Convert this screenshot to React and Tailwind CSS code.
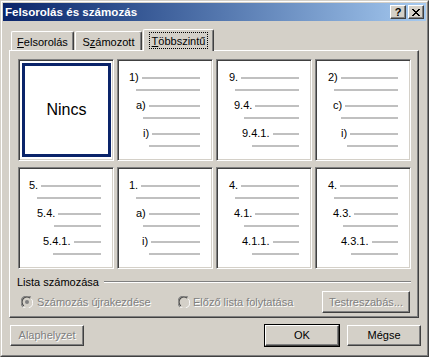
import React from "react";

const F = { fontFamily: '"Liberation Sans", Arial, sans-serif' };

const cells = [
  { none: true },
  {
    levels: [
      { t: "1)", l: "ml-[10px]", b: "ml-[17px]" },
      { t: "a)", l: "ml-[17px]", b: "ml-[24px]" },
      { t: "i)", l: "ml-[24px]", b: "ml-[30px]" },
    ],
  },
  {
    levels: [
      { t: "9.", l: "ml-[11px]", b: "ml-[17px]" },
      { t: "9.4.", l: "ml-[16px]", b: "ml-[26px]" },
      { t: "9.4.1.", l: "ml-[24px]", b: "ml-[34px]" },
    ],
  },
  {
    levels: [
      { t: "2)", l: "ml-[11px]", b: "ml-[17px]" },
      { t: "c)", l: "ml-[16px]", b: "ml-[24px]" },
      { t: "i)", l: "ml-[24px]", b: "ml-[30px]" },
    ],
  },
  {
    levels: [
      { t: "5.", l: "ml-[9px]", b: "ml-[17px]" },
      { t: "5.4.", l: "ml-[17px]", b: "ml-[34px]" },
      { t: "5.4.1.", l: "ml-[23px]", b: "ml-[33px]" },
    ],
  },
  {
    levels: [
      { t: "1.", l: "ml-[10px]", b: "ml-[17px]" },
      { t: "a)", l: "ml-[17px]", b: "ml-[24px]" },
      { t: "i)", l: "ml-[23px]", b: "ml-[30px]" },
    ],
  },
  {
    levels: [
      { t: "4.", l: "ml-[11px]", b: "ml-[17px]" },
      { t: "4.1.", l: "ml-[16px]", b: "ml-[26px]" },
      { t: "4.1.1.", l: "ml-[24px]", b: "ml-[34px]" },
    ],
  },
  {
    levels: [
      { t: "4.", l: "ml-[11px]", b: "ml-[17px]" },
      { t: "4.3.", l: "ml-[16px]", b: "ml-[26px]" },
      { t: "4.3.1.", l: "ml-[24px]", b: "ml-[34px]" },
    ],
  },
];

const raised =
  "border border-t-white border-l-white border-b-[#404040] border-r-[#404040] shadow-[inset_-1px_-1px_0_#808080]";
const disabledText = "text-[#808080] [text-shadow:1px_1px_0_#ffffff]";

function Cell({ cell }) {
  return (
    <div className="w-[96px] h-[102px] bg-white border border-t-[#808080] border-l-[#808080] border-b-white border-r-white shadow-[inset_1px_1px_0_#404040,inset_-1px_-1px_0_#d4d0c8] p-[1px]">
      {cell.none ? (
        <div className="h-[94px] m-[2px] mr-[1px] mb-[0px] border-[3px] border-[#0a246a] flex items-center justify-center text-[16px] text-black">
          Nincs
        </div>
      ) : (
        <div className="flex flex-col pt-[11px] pr-[11px]">
          {cell.levels.map((lv, i) => (
            <div key={i} className="flex flex-col mb-[4px]">
              <div className="flex items-center h-[12px]">
                <span className={`${lv.l} text-[11px] leading-[12px] mb-[2px] text-black whitespace-nowrap`}>
                  {lv.t}
                </span>
                <div className="ml-[3px] flex-1 h-[2px] bg-[#c0c0c0]" />
              </div>
              <div className="flex items-center h-[12px]">
                <div className={`${lv.b} flex-1 h-[2px] bg-[#c0c0c0]`} />
              </div>
            </div>
          ))}
        </div>
      )}
    </div>
  );
}

function Radio({ checked }) {
  return (
    <svg width="12" height="12" viewBox="0 0 12 12" className="shrink-0">
      <path d="M10.5 3.2 A5.5 5.5 0 0 1 1.5 10.2" stroke="#ffffff" strokeWidth="1" fill="none" />
      <path d="M9.6 3.6 A4.5 4.5 0 0 1 2.4 9.4" stroke="#d4d0c8" strokeWidth="1" fill="none" />
      <circle cx="6" cy="6" r="4" fill="#d4d0c8" />
      <path d="M1.5 10.2 A5.5 5.5 0 0 1 10.5 1.8" stroke="#808080" strokeWidth="1" fill="none" transform="rotate(-8 6 6)" />
      <path d="M2.4 9.4 A4.5 4.5 0 0 1 9.6 2.6" stroke="#404040" strokeWidth="1" fill="none" transform="rotate(-8 6 6)" />
      {checked && <circle cx="6" cy="6" r="2" fill="#808080" />}
    </svg>
  );
}

export default function App() {
  return (
    <div
      style={F}
      className="w-[429px] h-[357px] border border-t-[#d4d0c8] border-l-[#d4d0c8] border-b-[#404040] border-r-[#404040] bg-[#d4d0c8] text-[11px] text-black select-none"
    >
      <div className="h-full border border-t-white border-l-white border-b-[#808080] border-r-[#808080] p-[1px]">
        {/* Title bar */}
        <div className="h-[18px] flex items-center bg-gradient-to-r from-[#0a246a] to-[#a6caf0] pl-[2px] pr-[2px]">
          <span className="text-white font-bold text-[11.6px] leading-[14px]">Felsorolás és számozás</span>
          <div className="ml-auto flex gap-[2px]">
            <div className={`w-[16px] h-[14px] bg-[#d4d0c8] ${raised} flex items-center justify-center`}>
              <span className="font-bold text-[11px] leading-[11px] text-black">?</span>
            </div>
            <div className={`w-[16px] h-[14px] bg-[#d4d0c8] ${raised} flex items-center justify-center`}>
              <svg width="8" height="7" viewBox="0 0 8 7" shapeRendering="crispEdges">
                <path d="M0 0h2v1h-2zM6 0h2v1h-2zM1 1h2v1h-2zM5 1h2v1h-2zM2 2h4v1h-4zM3 3h2v1h-2zM2 4h4v1h-4zM1 5h2v1h-2zM5 5h2v1h-2zM0 6h2v1h-2zM6 6h2v1h-2z" fill="#000" />
              </svg>
            </div>
          </div>
        </div>

        {/* Body */}
        <div className="pl-[6px] pt-[8px]">
          {/* Tabs */}
          <div className="flex items-end h-[21px]">
            <div className="ml-[2px] w-[63px] h-[19px] border-t border-l border-t-white border-l-white border-r border-r-[#404040] shadow-[inset_-1px_0_0_#808080] rounded-tl-[2px] rounded-tr-[2px] flex items-center justify-center pt-[3px]">
              <span><span className="underline">F</span>elsorolás</span>
            </div>
            <div className="ml-[1px] w-[67px] h-[19px] border-t border-l border-t-white border-l-white border-r border-r-[#404040] shadow-[inset_-1px_0_0_#808080] rounded-tl-[2px] rounded-tr-[2px] flex items-center justify-center pt-[3px]">
              <span>S<span className="underline">z</span>ámozott</span>
            </div>
            <div className="relative z-10 ml-[1px] w-[71px] h-[22px] -mb-[1px] bg-[#d4d0c8] border-t border-l border-t-white border-l-white border-r border-r-[#404040] shadow-[inset_-1px_0_0_#808080] rounded-tl-[2px] rounded-tr-[2px] flex items-start justify-center pt-[2px]">
              <span className="h-[17px] px-[2px] border border-dotted border-black flex items-center pt-[1px]">
                <span><span className="underline">T</span>öbbszintű</span>
              </span>
            </div>
          </div>

          {/* Panel */}
          <div className="w-[410px] h-[268px] border border-t-white border-l-white border-b-[#404040] border-r-[#404040] shadow-[inset_-1px_-1px_0_#808080] pl-[8px] pt-[8px] flex flex-col">
            <div className="grid grid-cols-[repeat(4,96px)] gap-x-[3px] gap-y-[6px]">
              {cells.map((c, i) => (
                <Cell key={i} cell={c} />
              ))}
            </div>

            <div className="mt-[7px] -ml-[1px] flex items-center h-[12px]">
              <span className="leading-[12px]">Lista számozása</span>
              <div className="ml-[5px] mr-[7px] flex-1 h-[2px] border-t border-t-[#808080] border-b border-b-white" />
            </div>

            <div className="mt-[3px] ml-[3px] h-[22px] flex items-center">
              <div className="w-[157px] flex items-center gap-[4px]">
                <Radio checked />
                <span className={disabledText}>Számozás újrakezdése</span>
              </div>
              <div className="w-[144px] flex items-center gap-[3px]">
                <Radio />
                <span className={disabledText}>Előző lista folytatása</span>
              </div>
              <div className={`w-[88px] h-[22px] ${raised} flex items-center justify-center`}>
                <span className={disabledText}>Testreszabás...</span>
              </div>
            </div>
          </div>

          {/* Bottom buttons */}
          <div className="mt-[7px] h-[21px] flex items-center">
            <div className={`ml-[1px] w-[74px] h-[21px] ${raised} flex items-center justify-center`}>
              <span className={disabledText}>Alaphelyzet</span>
            </div>
            <div className="ml-[180px] w-[76px] h-[23px] border border-black flex">
              <div className={`w-[74px] h-[21px] ${raised} flex items-center justify-center`}>
                <span>OK</span>
              </div>
            </div>
            <div className={`ml-[7px] w-[74px] h-[21px] ${raised} flex items-center justify-center`}>
              <span>Mégse</span>
            </div>
          </div>
        </div>
      </div>
    </div>
  );
}
